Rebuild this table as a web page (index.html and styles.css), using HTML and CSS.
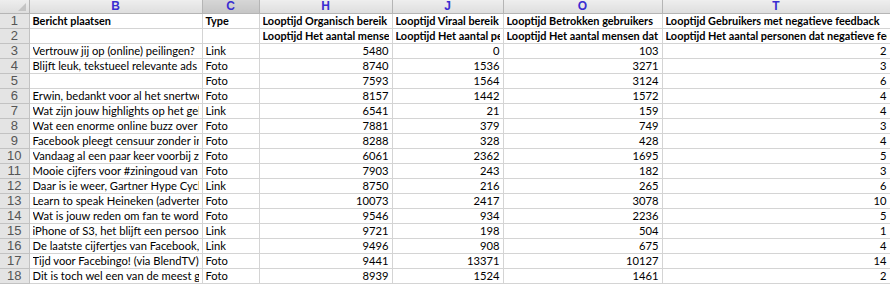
FILE: index.html
```html
<!DOCTYPE html>
<html>
<head>
<meta charset="utf-8">
<link rel="stylesheet" href="styles.css">
</head>
<body>
<table class="sheet">
  <colgroup>
    <col class="c-rn"><col class="c-b"><col class="c-c"><col class="c-h"><col class="c-j"><col class="c-o"><col class="c-t">
  </colgroup>
  <thead>
    <tr class="colhead">
      <th class="corner"><span class="tri"></span></th>
      <th>B</th><th class="sel">C</th><th>H</th><th>J</th><th>O</th><th>T</th>
    </tr>
  </thead>
  <tbody>
    <tr><th class="rn">1</th><td class="b">Bericht plaatsen</td><td class="b">Type</td><td class="b"><div>Looptijd Organisch bereik</div></td><td class="b"><div>Looptijd Viraal bereik</div></td><td class="b"><div>Looptijd Betrokken gebruikers</div></td><td class="b"><div>Looptijd Gebruikers met negatieve feedback</div></td></tr>
    <tr><th class="rn">2</th><td></td><td></td><td class="b"><div>Looptijd Het aantal mensen dat uw bericht zag</div></td><td class="b"><div>Looptijd Het aantal personen dat</div></td><td class="b"><div>Looptijd Het aantal mensen dat op uw bericht klikte</div></td><td class="b"><div>Looptijd Het aantal personen dat negatieve feedback gaf</div></td></tr>
    <tr><th class="rn">3</th><td><div>Vertrouw jij op (online) peilingen?</div></td><td>Link</td><td class="n">5480</td><td class="n">0</td><td class="n">103</td><td class="n">2</td></tr>
    <tr><th class="rn">4</th><td><div>Blijft leuk, tekstueel relevante ads</div></td><td>Foto</td><td class="n">8740</td><td class="n">1536</td><td class="n">3271</td><td class="n">3</td></tr>
    <tr><th class="rn">5</th><td></td><td>Foto</td><td class="n">7593</td><td class="n">1564</td><td class="n">3124</td><td class="n">6</td></tr>
    <tr><th class="rn">6</th><td><div>Erwin, bedankt voor al het snertweer</div></td><td>Foto</td><td class="n">8157</td><td class="n">1442</td><td class="n">1572</td><td class="n">4</td></tr>
    <tr><th class="rn">7</th><td><div>Wat zijn jouw highlights op het gebied</div></td><td>Link</td><td class="n">6541</td><td class="n">21</td><td class="n">159</td><td class="n">4</td></tr>
    <tr><th class="rn">8</th><td><div>Wat een enorme online buzz over het</div></td><td>Foto</td><td class="n">7881</td><td class="n">379</td><td class="n">749</td><td class="n">3</td></tr>
    <tr><th class="rn">9</th><td><div>Facebook pleegt censuur zonder in te</div></td><td>Foto</td><td class="n">8288</td><td class="n">328</td><td class="n">428</td><td class="n">4</td></tr>
    <tr><th class="rn">10</th><td><div>Vandaag al een paar keer voorbij zien</div></td><td>Foto</td><td class="n">6061</td><td class="n">2362</td><td class="n">1695</td><td class="n">5</td></tr>
    <tr><th class="rn">11</th><td><div>Mooie cijfers voor #ziningoud van Facebook</div></td><td>Foto</td><td class="n">7903</td><td class="n">243</td><td class="n">182</td><td class="n">3</td></tr>
    <tr><th class="rn">12</th><td><div>Daar is ie weer, Gartner Hype Cycle</div></td><td>Link</td><td class="n">8750</td><td class="n">216</td><td class="n">265</td><td class="n">6</td></tr>
    <tr><th class="rn">13</th><td><div>Learn to speak Heineken (advertentie)</div></td><td>Foto</td><td class="n">10073</td><td class="n">2417</td><td class="n">3078</td><td class="n">10</td></tr>
    <tr><th class="rn">14</th><td><div>Wat is jouw reden om fan te worden</div></td><td>Foto</td><td class="n">9546</td><td class="n">934</td><td class="n">2236</td><td class="n">5</td></tr>
    <tr><th class="rn">15</th><td><div>iPhone of S3, het blijft een persoonlijke</div></td><td>Link</td><td class="n">9721</td><td class="n">198</td><td class="n">504</td><td class="n">1</td></tr>
    <tr><th class="rn">16</th><td><div>De laatste cijfertjes van Facebook, Twitter</div></td><td>Link</td><td class="n">9496</td><td class="n">908</td><td class="n">675</td><td class="n">4</td></tr>
    <tr><th class="rn">17</th><td><div>Tijd voor Facebingo! (via BlendTV)</div></td><td>Foto</td><td class="n">9441</td><td class="n">13371</td><td class="n">10127</td><td class="n">14</td></tr>
    <tr><th class="rn">18</th><td><div>Dit is toch wel een van de meest geweldige</div></td><td>Foto</td><td class="n">8939</td><td class="n">1524</td><td class="n">1461</td><td class="n">2</td></tr>
  </tbody>
</table>
</body>
</html>
```
FILE: styles.css
```css
html, body {
  margin: 0;
  padding: 0;
  background: #ffffff;
}
.sheet {
  border-collapse: collapse;
  table-layout: fixed;
  width: 890px;
  font-family: Lato, "Liberation Sans", sans-serif;
  font-size: 11.2px;
  color: #000;
}
.c-rn { width: 29px; }
.c-b { width: 173px; }
.c-c { width: 57px; }
.c-h { width: 133px; }
.c-j { width: 111px; }
.c-o { width: 159px; }
.c-t { width: 228px; }

.sheet td, .sheet th {
  padding: 0 3px;
  height: 14px;
  line-height: 14px;
  border: 1px solid #d4d4d4;
  white-space: nowrap;
  overflow: hidden;
  text-align: left;
  font-weight: normal;
}
.sheet td > div {
  overflow: hidden;
  white-space: nowrap;
}
.sheet td.b {
  font-weight: bold;
  font-size: 10.9px;
}
.sheet td.n { text-align: right; }

.colhead th {
  height: 13px;
  line-height: 13px;
  background: linear-gradient(#eeeeee, #dedede);
  border: 1px solid #b5b5b5;
  border-top: none;
  color: #3a2dd1;
  font-weight: bold;
  text-align: center;
  font-size: 12px;
  font-family: "Liberation Sans", sans-serif;
}
.colhead th.sel {
  background: linear-gradient(#d6d6d6, #c6c6c6);
}
.colhead th.corner {
  position: relative;
  border-left: none;
}
.tri {
  position: absolute;
  right: 3px;
  bottom: 2px;
  width: 0;
  height: 0;
  border-left: 8px solid transparent;
  border-bottom: 8px solid #c4c4c4;
}
.sheet th.rn {
  background: #e4e4e4;
  color: #555555;
  text-align: center;
  font-family: "Liberation Sans", sans-serif;
  font-size: 13px;
  border-left: none;
  border-color: #c2c2c2;
  padding: 0;
}
```
